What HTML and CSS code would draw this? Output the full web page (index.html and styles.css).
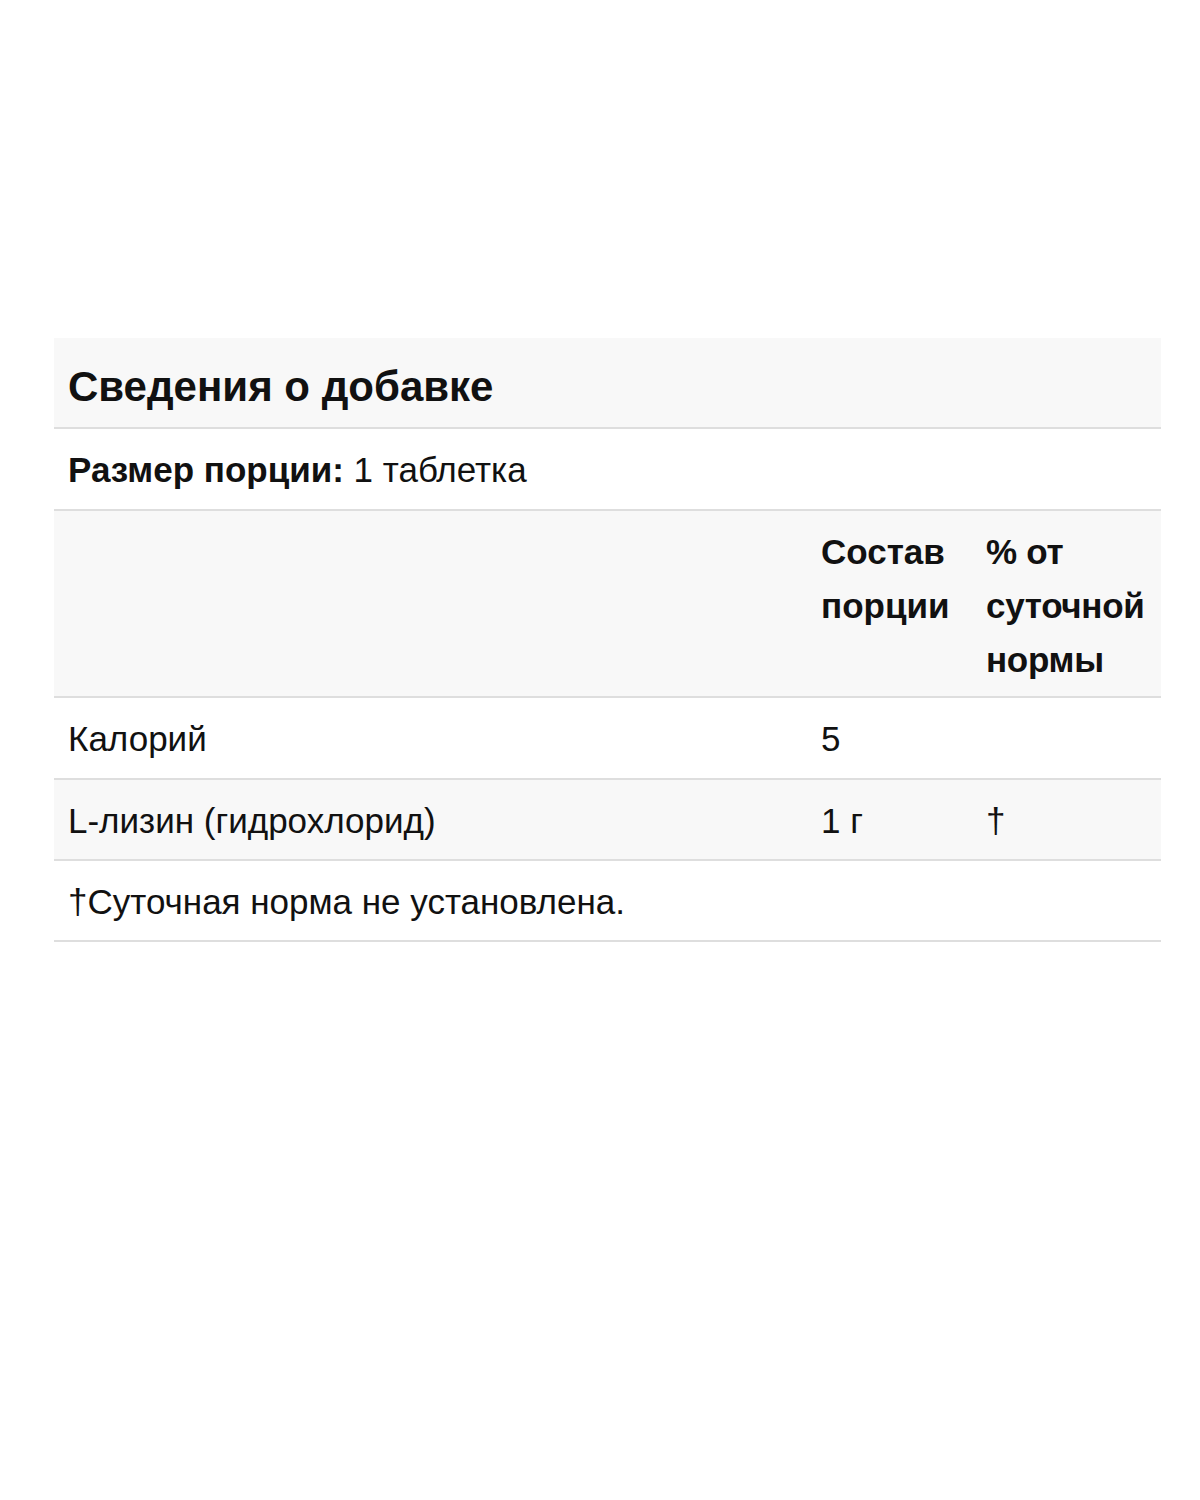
FILE: index.html
```html
<!DOCTYPE html>
<html lang="ru">
<head>
<meta charset="utf-8">
<link rel="stylesheet" href="styles.css">
</head>
<body>
<div class="page">
  <table class="facts">
    <colgroup><col class="c1"><col class="c2"><col class="c3"></colgroup>
    <tr class="title-row"><th colspan="3" class="title">Сведения о добавке</th></tr>
    <tr class="serving"><td colspan="3"><b>Размер порции:</b> 1 таблетка</td></tr>
    <tr class="head gray">
      <td></td>
      <td><b>Состав порции</b></td>
      <td class="pct"><b>% от суточной нормы</b></td>
    </tr>
    <tr><td>Калорий</td><td>5</td><td></td></tr>
    <tr class="gray tight"><td>L-лизин (гидрохлорид)</td><td>1 г</td><td>†</td></tr>
    <tr class="tight"><td colspan="3">†Суточная норма не установлена.</td></tr>
  </table>
</div>
</body>
</html>
```
FILE: styles.css
```css
html, body { margin: 0; padding: 0; background: #fff; }
body { font-family: "Liberation Sans", Arial, sans-serif; color: #111; }
.page { padding: 338px 39px 0 54px; }
.facts { width: 1107px; border-collapse: collapse; font-size: 35px; table-layout: fixed; }
.facts td, .facts th { text-align: left; vertical-align: top; padding: 14px 14px 12px; line-height: 54px; border-bottom: 2px solid #dedede; }
.facts .title { background: #f8f8f8; font-size: 42px; font-weight: bold; padding: 22px 14px 13px; }
.gray td { background: #f8f8f8; }
.facts .head td { padding-top: 14px; padding-bottom: 9px; }
.facts .tight td { padding-bottom: 11px; }
.c1 { width: 753px; }
.c2 { width: 165px; }
.c3 { width: 189px; }
.pct b { letter-spacing: -0.3px; }
b { font-weight: bold; }
```
